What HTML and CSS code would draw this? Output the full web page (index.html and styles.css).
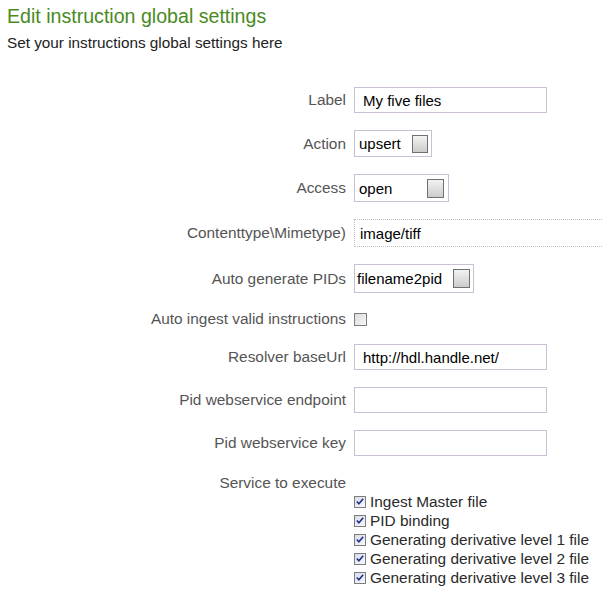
FILE: index.html
```html
<!DOCTYPE html>
<html lang="en">
<head>
<meta charset="utf-8">
<title>Edit instruction global settings</title>
<link rel="stylesheet" href="styles.css">
</head>
<body>
<div class="page">
  <h1 class="title">Edit instruction global settings</h1>
  <p class="subtitle">Set your instructions global settings here</p>

  <form class="form">
    <div class="row">
      <span class="label">Label</span>
      <input class="text w-md" type="text" value="My five files">
    </div>
    <div class="row">
      <span class="label">Action</span>
      <span class="select w-action h27"><span class="value">upsert</span><span class="arrow"></span></span>
    </div>
    <div class="row">
      <span class="label">Access</span>
      <span class="select w-access h28"><span class="value">open</span><span class="arrow big"></span></span>
    </div>
    <div class="row">
      <span class="label">Contenttype\Mimetype)</span>
      <input class="text w-wide h28 dotted" type="text" value="image/tiff">
    </div>
    <div class="row">
      <span class="label">Auto generate PIDs</span>
      <span class="select w-pid h29"><span class="value">filename2pid</span><span class="arrow big"></span></span>
    </div>
    <div class="row row-check">
      <span class="label">Auto ingest valid instructions</span>
      <span class="check"></span>
    </div>
    <div class="row">
      <span class="label">Resolver baseUrl</span>
      <input class="text w-md" type="text" value="http://hdl.handle.net/">
    </div>
    <div class="row">
      <span class="label">Pid webservice endpoint</span>
      <input class="text w-md" type="text" value="">
    </div>
    <div class="row">
      <span class="label">Pid webservice key</span>
      <input class="text w-md" type="text" value="">
    </div>
    <div class="service">
      <div class="row row-service">
        <span class="label">Service to execute</span>
      </div>
      <ul class="services">
        <li><span class="check on"><svg viewBox="0 0 11 11" width="11" height="11"><path d="M2 5.5 L4.3 8 L9 2.5" fill="none" stroke="#24308c" stroke-width="1.8"/></svg></span>Ingest Master file</li>
        <li><span class="check on"><svg viewBox="0 0 11 11" width="11" height="11"><path d="M2 5.5 L4.3 8 L9 2.5" fill="none" stroke="#24308c" stroke-width="1.8"/></svg></span>PID binding</li>
        <li><span class="check on"><svg viewBox="0 0 11 11" width="11" height="11"><path d="M2 5.5 L4.3 8 L9 2.5" fill="none" stroke="#24308c" stroke-width="1.8"/></svg></span>Generating derivative level 1 file</li>
        <li><span class="check on"><svg viewBox="0 0 11 11" width="11" height="11"><path d="M2 5.5 L4.3 8 L9 2.5" fill="none" stroke="#24308c" stroke-width="1.8"/></svg></span>Generating derivative level 2 file</li>
        <li><span class="check on"><svg viewBox="0 0 11 11" width="11" height="11"><path d="M2 5.5 L4.3 8 L9 2.5" fill="none" stroke="#24308c" stroke-width="1.8"/></svg></span>Generating derivative level 3 file</li>
      </ul>
    </div>
  </form>
</div>
</body>
</html>
```
FILE: styles.css
```css
html, body {
  margin: 0;
  padding: 0;
  background: #ffffff;
  overflow: hidden;
}

.page {
  font-family: "Liberation Sans", Arial, sans-serif;
  padding: 4px 0 0 7px;
  overflow: hidden;
}

.title {
  margin: 0;
  font-size: 19.6px;
  line-height: 24px;
  font-weight: normal;
  color: #4a8a22;
}

.subtitle {
  margin: 6px 0 0 0;
  font-size: 15.3px;
  line-height: 18px;
  color: #222222;
}

.form {
  margin-top: 35px;
  display: flex;
  flex-direction: column;
  gap: 17px;
}

.row {
  display: grid;
  grid-template-columns: 339px auto;
  column-gap: 8px;
  align-items: center;
  justify-items: start;
}

.label {
  justify-self: end;
  font-size: 15.4px;
  line-height: 18px;
  color: #555555;
  white-space: nowrap;
}

.text {
  box-sizing: border-box;
  height: 26px;
  margin: 0;
  padding: 0 0 0 8px;
  border: 1px solid #cbbfd3;
  background: #ffffff;
  font-family: "Liberation Sans", Arial, sans-serif;
  font-size: 15px;
  color: #000000;
  outline: none;
}

.text.dotted {
  border: 1px dotted #b9c3b3;
  padding-left: 5px;
}

.select {
  box-sizing: border-box;
  height: 26px;
  display: inline-flex;
  align-items: center;
  justify-content: space-between;
  padding: 0 3px 0 4px;
  border: 1px solid #cbbfd3;
  background: #ffffff;
  font-size: 15px;
  color: #000000;
}

.w-md { width: 193px; }
.w-wide { width: 300px; }
.select.w-action { width: 78px; }
.select.w-access { width: 95px; padding-right: 4px; }
.select.w-pid { width: 120px; padding-left: 2px; }

.select.h27, .text.h27 { height: 27px; }
.select.h28, .text.h28 { height: 28px; }
.select.h29, .text.h29 { height: 29px; }

.arrow {
  box-sizing: border-box;
  width: 16px;
  height: 18px;
  border: 1px solid #707070;
  background: linear-gradient(#f2f2f2, #cccccc);
}

.arrow.big {
  width: 17px;
  height: 19px;
}

.check {
  box-sizing: border-box;
  display: inline-flex;
  align-items: center;
  justify-content: center;
  width: 13px;
  height: 13px;
  border: 1px solid #7d7d7d;
  background: linear-gradient(135deg, #dcdcdc, #f7f7f7);
}

.row-check {
  height: 17px;
}

.service {
  display: flex;
  flex-direction: column;
}

.row-service .label {
  line-height: 19px;
}

.services {
  list-style: none;
  margin: 0;
  padding: 0 0 0 347px;
}

.services li {
  display: flex;
  align-items: center;
  gap: 4px;
  height: 19px;
  font-size: 15.4px;
  color: #2a2a2a;
  white-space: nowrap;
}

.services .check {
  width: 12px;
  height: 12px;
  background: linear-gradient(135deg, #d8dde8, #f8f8fc);
}
```
